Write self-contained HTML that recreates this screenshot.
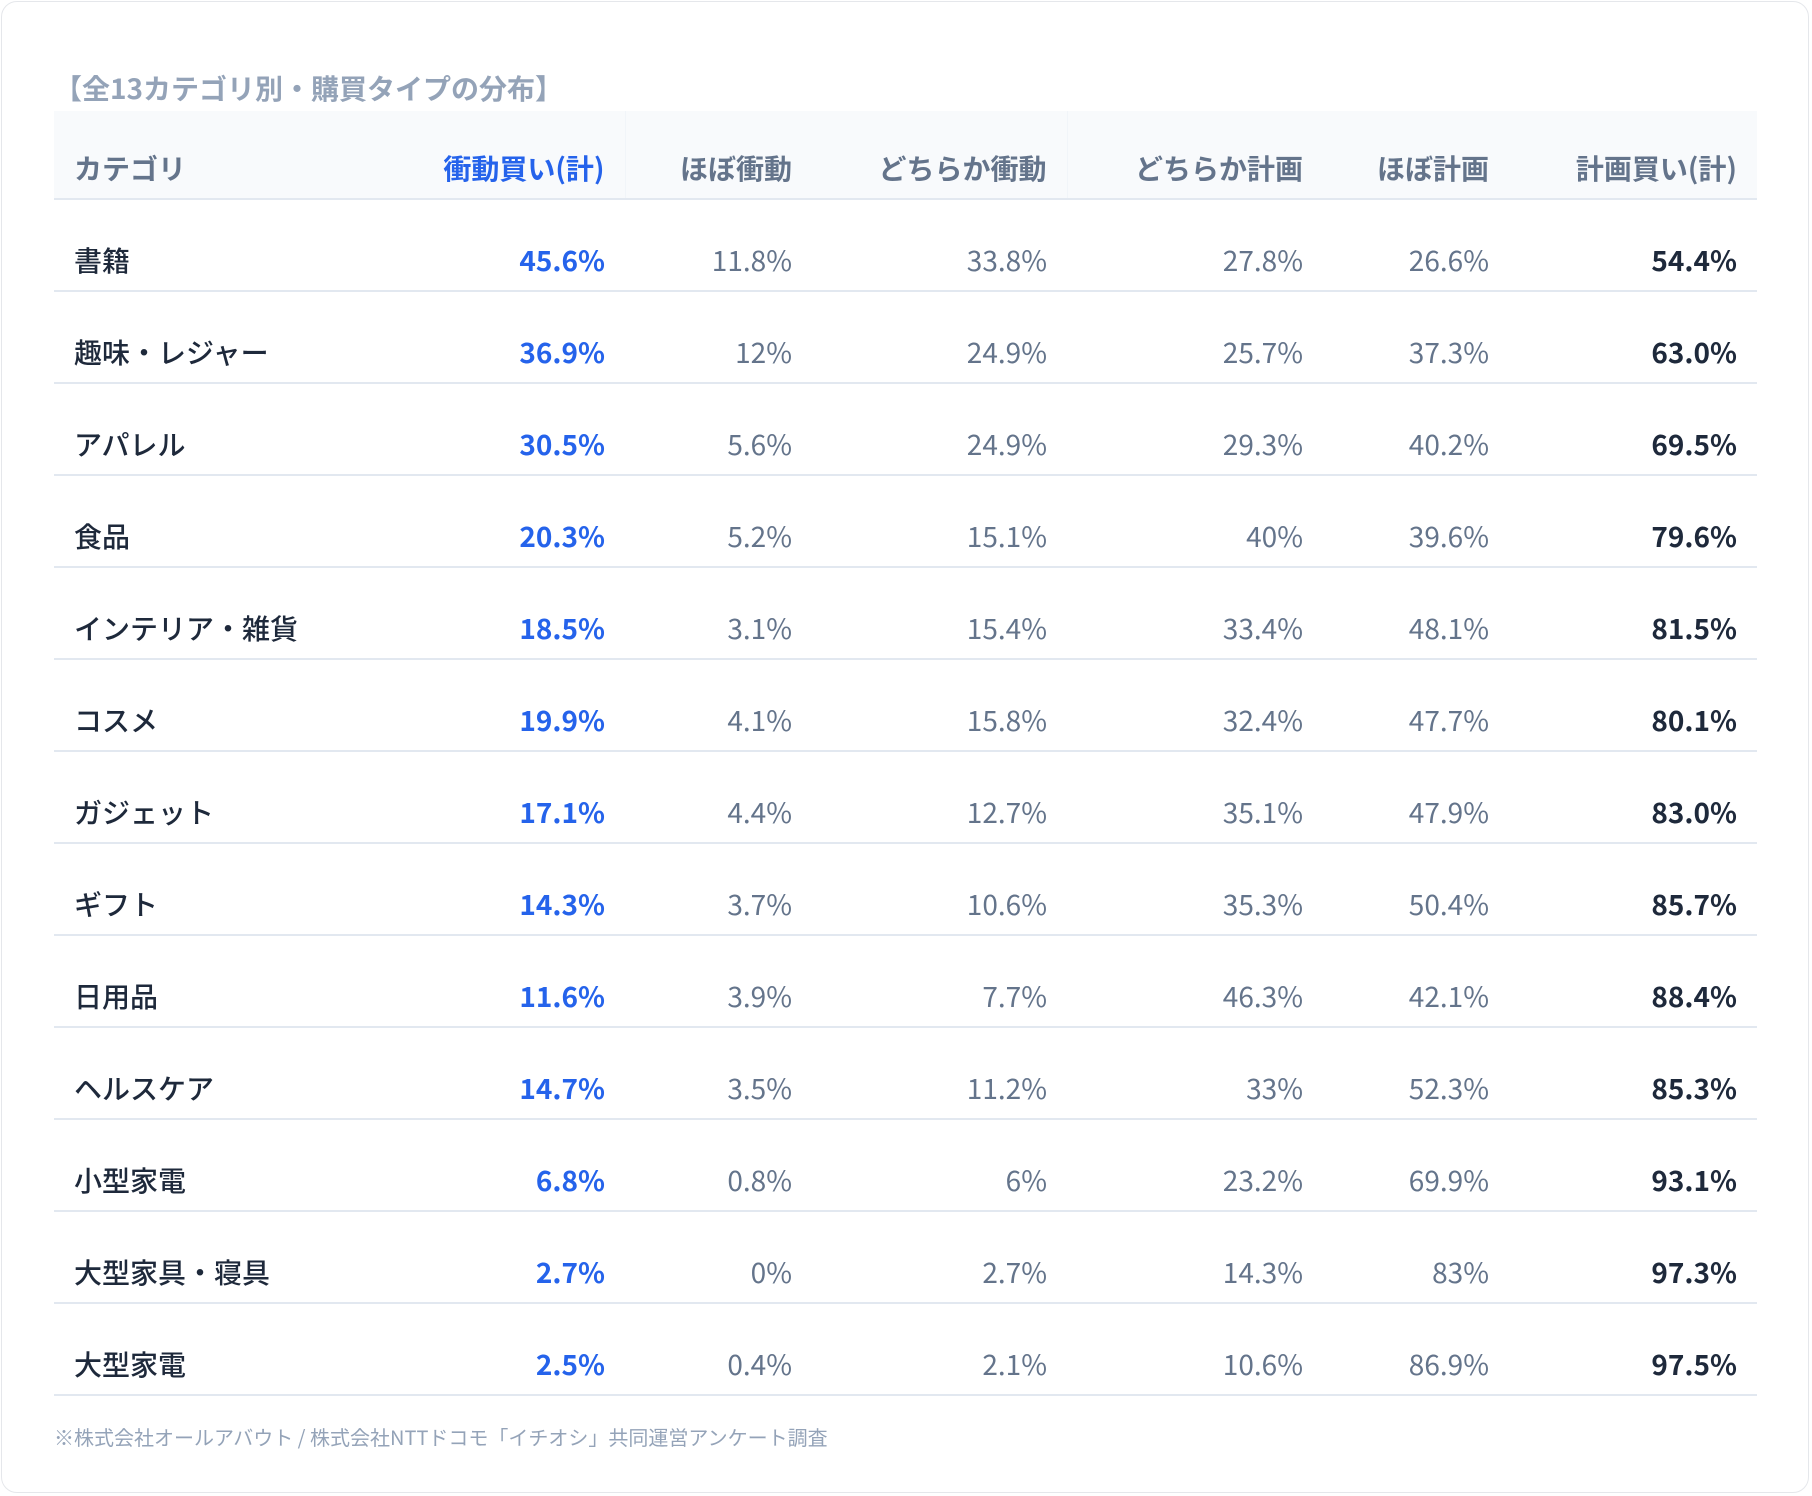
<!DOCTYPE html>
<html><head><meta charset="utf-8"><style>
html,body{margin:0;padding:0;background:#fff;}
body{width:1812px;height:1496px;overflow:hidden;font-family:"Noto Sans CJK JP","Liberation Sans",sans-serif;}
.card{position:absolute;left:1px;top:1px;width:1808px;height:1492px;border:1px solid #e5e7eb;border-radius:16px;box-sizing:border-box;background:#fff;}
.title{position:absolute;left:54px;top:70px;font-size:28px;font-weight:700;color:#94a3b8;line-height:36px;white-space:nowrap;}
table{position:absolute;left:54px;top:111px;width:1703px;border-collapse:collapse;table-layout:fixed;}
th,td{padding:0 20px;font-size:28px;text-align:right;white-space:nowrap;}
th{height:88px;background:#f8fafc;color:#64748b;font-weight:700;border-bottom:2px solid #e2e8f0;padding-top:27px;box-sizing:border-box;}
th.b{color:#2563eb;}
th.r{border-left:1px solid #f1f5f9;}
td{height:92px;border-bottom:2px solid #e2e8f0;color:#64748b;font-weight:400;padding-top:30px;box-sizing:border-box;}
td:first-child,th:first-child{text-align:left;}
td:first-child{color:#1e293b;font-weight:500;}
td.b{color:#2563eb;font-weight:700;}
td.k{color:#1e293b;font-weight:700;}
.foot{position:absolute;left:54px;top:1422px;font-size:20px;color:#94a3b8;white-space:nowrap;}
</style></head><body>
<div class="card"></div>
<div class="title">【全13カテゴリ別・購買タイプの分布】</div>
<table>
<colgroup><col style="width:300px"><col style="width:271px"><col style="width:187px"><col style="width:255px"><col style="width:256px"><col style="width:186px"><col style="width:248px"></colgroup>
<tr><th>カテゴリ</th><th class="b">衝動買い(計)</th><th class="r">ほぼ衝動</th><th>どちらか衝動</th><th class="r">どちらか計画</th><th>ほぼ計画</th><th>計画買い(計)</th></tr>
<tr><td>書籍</td><td class="b">45.6%</td><td>11.8%</td><td>33.8%</td><td>27.8%</td><td>26.6%</td><td class="k">54.4%</td></tr>
<tr><td>趣味・レジャー</td><td class="b">36.9%</td><td>12%</td><td>24.9%</td><td>25.7%</td><td>37.3%</td><td class="k">63.0%</td></tr>
<tr><td>アパレル</td><td class="b">30.5%</td><td>5.6%</td><td>24.9%</td><td>29.3%</td><td>40.2%</td><td class="k">69.5%</td></tr>
<tr><td>食品</td><td class="b">20.3%</td><td>5.2%</td><td>15.1%</td><td>40%</td><td>39.6%</td><td class="k">79.6%</td></tr>
<tr><td>インテリア・雑貨</td><td class="b">18.5%</td><td>3.1%</td><td>15.4%</td><td>33.4%</td><td>48.1%</td><td class="k">81.5%</td></tr>
<tr><td>コスメ</td><td class="b">19.9%</td><td>4.1%</td><td>15.8%</td><td>32.4%</td><td>47.7%</td><td class="k">80.1%</td></tr>
<tr><td>ガジェット</td><td class="b">17.1%</td><td>4.4%</td><td>12.7%</td><td>35.1%</td><td>47.9%</td><td class="k">83.0%</td></tr>
<tr><td>ギフト</td><td class="b">14.3%</td><td>3.7%</td><td>10.6%</td><td>35.3%</td><td>50.4%</td><td class="k">85.7%</td></tr>
<tr><td>日用品</td><td class="b">11.6%</td><td>3.9%</td><td>7.7%</td><td>46.3%</td><td>42.1%</td><td class="k">88.4%</td></tr>
<tr><td>ヘルスケア</td><td class="b">14.7%</td><td>3.5%</td><td>11.2%</td><td>33%</td><td>52.3%</td><td class="k">85.3%</td></tr>
<tr><td>小型家電</td><td class="b">6.8%</td><td>0.8%</td><td>6%</td><td>23.2%</td><td>69.9%</td><td class="k">93.1%</td></tr>
<tr><td>大型家具・寝具</td><td class="b">2.7%</td><td>0%</td><td>2.7%</td><td>14.3%</td><td>83%</td><td class="k">97.3%</td></tr>
<tr><td>大型家電</td><td class="b">2.5%</td><td>0.4%</td><td>2.1%</td><td>10.6%</td><td>86.9%</td><td class="k">97.5%</td></tr>
</table>
<div class="foot">※株式会社オールアバウト / 株式会社NTTドコモ「イチオシ」共同運営アンケート調査</div>
</body></html>
